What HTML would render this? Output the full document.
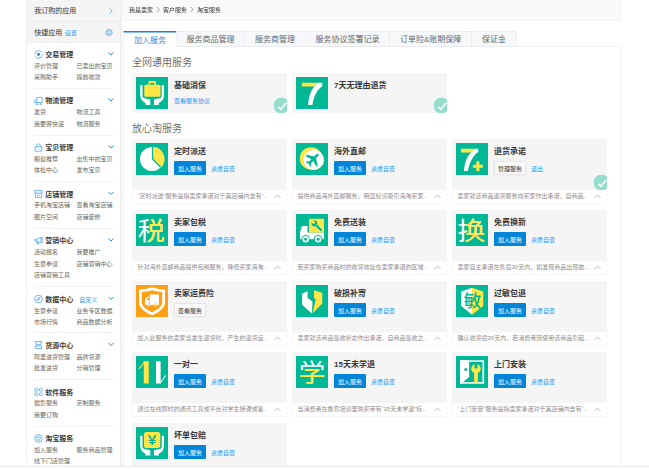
<!DOCTYPE html>
<html lang="zh-CN"><head><meta charset="utf-8"><title>淘宝服务</title>
<style>
html,body{margin:0;padding:0;background:#fff}
body{width:649px;height:469px;overflow:hidden;position:relative}
#p{position:absolute;left:0;top:0;width:1298px;height:938px;transform:scale(.5);transform-origin:0 0;overflow:hidden;
 font-family:"Liberation Sans","Noto Sans CJK SC",sans-serif;font-size:12px;color:#333}
.sf{font-family:"Liberation Sans","Noto Sans CJK SC",sans-serif}
.abs{position:absolute}
a{color:#1e96f3;text-decoration:none}
.sb{position:absolute;left:53px;top:0;width:188px;height:960px;background:#fff}
.sbl{position:absolute;left:0;top:0;width:1px;height:960px;background:#dedede}
.sbr{position:absolute;left:187px;top:0;width:3.500px;height:960px;background:#efefef}
.sr{position:absolute;left:1px;width:186px;background:#f5f5f5;border-bottom:1px solid #e6e6e6;box-sizing:border-box}
.sr .t{position:absolute;left:14.500px;font-size:14px;line-height:20px;color:#333;white-space:nowrap}
.sr .t a{font-size:12px;margin-left:1px}
.dv{position:absolute;left:16px;width:157px;height:1px;background:#e6e6e6}
.sh{position:absolute;left:37.500px;font:bold 14px/24px "Liberation Sans","Noto Sans CJK SC",sans-serif;color:#3c3c3c;white-space:nowrap}
.sh .zd{font:12px/24px "Liberation Sans","Noto Sans CJK SC",sans-serif;margin-left:8px}
.si{position:absolute;font-size:12px;line-height:20px;color:#666;white-space:nowrap}
.bc{position:absolute;left:247px;top:-1px;width:993px;height:40px;border:1px solid #e8e8e8;background:#fafafa}
.bc span{position:absolute;left:10px;top:10px;line-height:20px;font-size:12px;color:#333;white-space:nowrap}
.bc svg{margin:0 6px;vertical-align:-1px}
.tabs{position:absolute;left:247px;top:62px;height:31px;white-space:nowrap;font-size:0}
.tb{display:inline-block;box-sizing:border-box;height:31px;padding:0 20px;border-top:1px solid #e1e3e8;border-right:1px solid #e1e3e8;border-bottom:1px solid #e1e3e8;
 background:#f7f8fa;font-size:16px;line-height:32px;color:#666;vertical-align:top}
.tb.on{background:#fff;color:#2f8ae0;border-top:3px solid #1380d9;border-left:1px solid #e1e3e8;border-bottom:1px solid #fff;line-height:29px}
.box{position:absolute;left:247px;top:92px;width:993px;height:900px;border:1px solid #e1e3e8;background:#fff}
.h2{position:absolute;left:264px;font-size:20px;font-weight:300;line-height:28px;color:#2b2b2b;white-space:nowrap}
.cd{position:absolute;width:310px}
.cg{position:relative;background:#f5f5f5;overflow:hidden}
.ic{position:absolute;left:8px;top:8px;display:block}
.ct{position:absolute;left:84px;top:12px;font:bold 16px/24px "Liberation Sans","Noto Sans CJK SC",sans-serif;color:#383838;white-space:nowrap}
.bt{position:absolute;left:84px;top:44px;width:64px;height:28px;box-sizing:border-box;border-radius:2px;font-size:12px;line-height:31px;text-align:center;white-space:nowrap}
.bj{background:#0285d9;color:#fff}
.bw{background:#f9f9f9;color:#333;border:1px solid #ccc;line-height:29px}
.lk{position:absolute;left:158px;top:49.500px;font-size:12px;line-height:20px;color:#1e96f3;white-space:nowrap}
.lk0{left:84px;top:46px}
.bd{position:absolute;right:-5px;bottom:-1px}
.ds{position:relative;height:28px;box-sizing:border-box;border:1px solid #eee;border-top:0;background:#fff}
.ds span{position:absolute;left:10px;top:2px;line-height:20px;font-size:12px;color:#8c8c8c;white-space:nowrap}
.ds svg{position:absolute;left:283px;top:9px}
.ft{position:absolute;left:0;top:932px;width:1298px;height:6px;background:#fdfdfd;border-top:2px solid #ebebeb;box-sizing:border-box}
</style></head><body><div id="p">
<div class="sb"><div class="sbl"></div><div class="sbr"></div>
<div class="sr" style="top:0;height:44px;border-bottom:2px solid #ebebeb"><span class="t" style="top:10px">我订购的应用</span><svg class="abs" style="left:163.500px;top:15.500px" width="8" height="12" viewBox="0 0 8 12"><path d="M1 1l5.500 5l-5.500 5" fill="none" stroke="#3a9df0" stroke-width="1.400"/></svg></div>
<div class="sr" style="top:44px;height:41.500px;border-bottom:1.500px solid #e9e9e9"><span class="t" style="top:10px">快捷应用 <a>设置</a></span><svg class="abs" style="left:156px;top:12.500px" width="16" height="16" viewBox="0 0 16 16"><circle cx="8" cy="8" r="5.800" fill="none" stroke="#3a9df0" stroke-width="1.400"/><circle cx="8" cy="8" r="6.800" fill="none" stroke="#3a9df0" stroke-width="1" stroke-dasharray="2.200 3.140"/><circle cx="8" cy="8" r="2.300" fill="none" stroke="#3a9df0" stroke-width="1.200"/></svg></div>
<svg class="abs" style="left:14.500px;top:99.5px" width="18" height="18" viewBox="0 0 16 16"><circle cx="8" cy="8" r="6.800" fill="none" stroke="#3a9df0" stroke-width="1.300" stroke-dasharray="17 4.360"/><path d="M5.300 5.200h5.400v3.600L8 11.600L5.300 8.800z" fill="#3a9df0"/></svg>
<div class="sh" style="top:96.5px">交易管理</div>
<svg class="abs" style="left:162.500px;top:103.5px" width="12" height="8" viewBox="0 0 12 8"><path d="M1 1l5 5l5-5" fill="none" stroke="#2188e3" stroke-width="1.900"/></svg>
<div class="si" style="top:121.3px;left:15px">评价管理</div>
<div class="si" style="top:121.3px;left:100px">已卖出的宝贝</div>
<div class="si" style="top:144.2px;left:15px">采购助手</div>
<div class="si" style="top:144.2px;left:100px">提前收款</div>
<div class="dv" style="top:176px"></div>
<svg class="abs" style="left:14.500px;top:192px" width="18" height="18" viewBox="0 0 16 16"><path d="M5 2.500h9.500v9h-9.500zM5 6.500h-2.500l-1.700 2.500v2.500h4.200M5.500 13.500a1.300 1.300 0 1 0 .010 0M12 13.500a1.300 1.300 0 1 0 .010 0" fill="none" stroke="#3a9df0" stroke-width="1.300"/></svg>
<div class="sh" style="top:189px">物流管理</div>
<svg class="abs" style="left:162.500px;top:196px" width="12" height="8" viewBox="0 0 12 8"><path d="M1 1l5 5l5-5" fill="none" stroke="#2188e3" stroke-width="1.900"/></svg>
<div class="si" style="top:213.8px;left:15px">发货</div>
<div class="si" style="top:213.8px;left:100px">物流工具</div>
<div class="si" style="top:236.7px;left:15px">我要寄快递</div>
<div class="si" style="top:236.7px;left:100px">物流服务</div>
<div class="dv" style="top:269.5px"></div>
<svg class="abs" style="left:14.500px;top:285.5px" width="18" height="18" viewBox="0 0 16 16"><path d="M2 6.500h12v8h-12zM4.500 6.500v-1.500a3.500 3.500 0 0 1 7 0v1.500" fill="none" stroke="#3a9df0" stroke-width="1.300"/></svg>
<div class="sh" style="top:282.5px">宝贝管理</div>
<svg class="abs" style="left:162.500px;top:289.5px" width="12" height="8" viewBox="0 0 12 8"><path d="M1 1l5 5l5-5" fill="none" stroke="#2188e3" stroke-width="1.900"/></svg>
<div class="si" style="top:307.3px;left:15px">橱窗推荐</div>
<div class="si" style="top:307.3px;left:100px">出售中的宝贝</div>
<div class="si" style="top:330.2px;left:15px">体检中心</div>
<div class="si" style="top:330.2px;left:100px">发布宝贝</div>
<div class="dv" style="top:362.5px"></div>
<svg class="abs" style="left:14.500px;top:378.5px" width="18" height="18" viewBox="0 0 16 16"><path d="M1.500 2h13v4.500h-13zM2.500 6.500v7.500h11v-7.500M5.500 10h5" fill="none" stroke="#3a9df0" stroke-width="1.300"/></svg>
<div class="sh" style="top:375.5px">店铺管理</div>
<svg class="abs" style="left:162.500px;top:382.5px" width="12" height="8" viewBox="0 0 12 8"><path d="M1 1l5 5l5-5" fill="none" stroke="#2188e3" stroke-width="1.900"/></svg>
<div class="si" style="top:400.3px;left:15px">手机淘宝店铺</div>
<div class="si" style="top:400.3px;left:100px">查看淘宝店铺</div>
<div class="si" style="top:423.2px;left:15px">图片空间</div>
<div class="si" style="top:423.2px;left:100px">店铺装修</div>
<div class="dv" style="top:456px"></div>
<svg class="abs" style="left:14.500px;top:472px" width="18" height="18" viewBox="0 0 16 16"><path d="M1.500 5.800h3l8-3.800v10.500l-8-3.700h-3zM4 9l1.800 5.500h2.200l-1.200-4.500M14.500 2v10.500" fill="none" stroke="#3a9df0" stroke-width="1.300"/></svg>
<div class="sh" style="top:469px">营销中心</div>
<svg class="abs" style="left:162.500px;top:476px" width="12" height="8" viewBox="0 0 12 8"><path d="M1 1l5 5l5-5" fill="none" stroke="#2188e3" stroke-width="1.900"/></svg>
<div class="si" style="top:493.8px;left:15px">活动报名</div>
<div class="si" style="top:493.8px;left:100px">我要推广</div>
<div class="si" style="top:516.7px;left:15px">生意参谋</div>
<div class="si" style="top:516.7px;left:100px">店铺营销中心</div>
<div class="si" style="top:539.6px;left:15px">店铺营销工具</div>
<div class="dv" style="top:573px"></div>
<svg class="abs" style="left:14.500px;top:589px" width="18" height="18" viewBox="0 0 16 16"><circle cx="8" cy="8" r="6.800" fill="none" stroke="#3a9df0" stroke-width="1.300"/><path d="M5 11l2-4l4-2l-2 4z" fill="none" stroke="#3a9df0" stroke-width="1.200"/></svg>
<div class="sh" style="top:586px">数据中心 <a class="zd">自定义</a></div>
<svg class="abs" style="left:162.500px;top:593px" width="12" height="8" viewBox="0 0 12 8"><path d="M1 1l5 5l5-5" fill="none" stroke="#2188e3" stroke-width="1.900"/></svg>
<div class="si" style="top:610.8px;left:15px">生意参谋</div>
<div class="si" style="top:610.8px;left:100px">业务专区数据</div>
<div class="si" style="top:633.7px;left:15px">市场行情</div>
<div class="si" style="top:633.7px;left:100px">商品数据分析</div>
<div class="dv" style="top:665px"></div>
<svg class="abs" style="left:14.500px;top:681px" width="18" height="18" viewBox="0 0 16 16"><path d="M1.500 2h13M3 2l1 5.500h8l1-5.500M2.500 9.500h11v4.500h-11z" fill="none" stroke="#3a9df0" stroke-width="1.300"/></svg>
<div class="sh" style="top:678px">货源中心</div>
<svg class="abs" style="left:162.500px;top:685px" width="12" height="8" viewBox="0 0 12 8"><path d="M1 1l5 5l5-5" fill="none" stroke="#2188e3" stroke-width="1.900"/></svg>
<div class="si" style="top:702.8px;left:15px">阿里进货管理</div>
<div class="si" style="top:702.8px;left:100px">品牌货源</div>
<div class="si" style="top:725.7px;left:15px">批发进货</div>
<div class="si" style="top:725.7px;left:100px">分销管理</div>
<div class="dv" style="top:758.5px"></div>
<svg class="abs" style="left:14.500px;top:774.5px" width="18" height="18" viewBox="0 0 16 16"><rect x="1.500" y="1.500" width="5" height="5" rx="1.500" fill="none" stroke="#3a9df0" stroke-width="1.300"/><rect x="9.500" y="1.500" width="5" height="5" rx="1.500" fill="none" stroke="#3a9df0" stroke-width="1.300"/><rect x="1.500" y="9.500" width="5" height="5" rx="1.500" fill="none" stroke="#3a9df0" stroke-width="1.300"/><rect x="9.500" y="9.500" width="5" height="5" rx="1.500" fill="none" stroke="#3a9df0" stroke-width="1.300"/></svg>
<div class="sh" style="top:771.5px">软件服务</div>
<div class="si" style="top:796.3px;left:15px">摄影服务</div>
<div class="si" style="top:796.3px;left:100px">定制服务</div>
<div class="si" style="top:819.2px;left:15px">我要订购</div>
<div class="dv" style="top:851.5px"></div>
<svg class="abs" style="left:14.500px;top:867.5px" width="18" height="18" viewBox="0 0 16 16"><circle cx="8" cy="8" r="6.800" fill="none" stroke="#3a9df0" stroke-width="1.300"/><path d="M8 3.600l1.300 2.700l3 .400l-2.200 2.100l.500 3l-2.600-1.400l-2.600 1.400l.500-3l-2.200-2.100l3-.400z" fill="none" stroke="#3a9df0" stroke-width="1.100" stroke-linejoin="round"/></svg>
<div class="sh" style="top:864.5px">淘宝服务</div>
<div class="si" style="top:889.3px;left:15px">加入服务</div>
<div class="si" style="top:889.3px;left:100px">服务商品管理</div>
<div class="si" style="top:912.2px;left:15px">线下门店管理</div>
</div>
<div class="bc"><span>我是卖家<svg width="8" height="12" viewBox="0 0 8 12"><path d="M1 .500l5.500 5.500l-5.500 5.500" fill="none" stroke="#555" stroke-width="1.100"/></svg>客户服务<svg width="8" height="12" viewBox="0 0 8 12"><path d="M1 .500l5.500 5.500l-5.500 5.500" fill="none" stroke="#555" stroke-width="1.100"/></svg>淘宝服务</span></div>
<div class="box"></div>
<div class="tabs"><span class="tb on">加入服务</span><span class="tb">服务商品管理</span><span class="tb">服务商管理</span><span class="tb">服务协议签署记录</span><span class="tb">订单险&amp;账期保障</span><span class="tb">保证金</span></div>
<div class="h2" style="top:110px">全网通用服务</div>
<div class="h2" style="top:242px">放心淘服务</div>
<div class="cd" style="left:264px;top:146px"><div class="cg" style="height:80px"><svg class="ic" viewBox="0 0 64 64" width="64" height="64"><rect width="64" height="64" fill="#00b895"/><path d="M8.500 15.750H13V38Q13 42 17 42.500L28.500 45V55.750H19V52Q8.500 47 8.500 36z" fill="#fff"/><path d="M56 15.750H51.500V38Q51.500 42 47.500 42.500L36 45V55.750H45.500V52Q56 47 56 36z" fill="#fff"/><path d="M25 15.500v-5.500a2 2 0 0 1 2-2h11a2 2 0 0 1 2 2v5.500h-3.500v-3.500h-8v3.500z" fill="#ffe646"/><rect x="16.500" y="15.500" width="32.500" height="24" rx="3" fill="#ffe646"/></svg><div class="ct">基础消保</div><a class="lk lk0">查看服务协议</a><svg class="bd" width="32" height="32" viewBox="0 0 32 32"><circle cx="16" cy="16" r="16" fill="#96ddcb"/><path d="M9.500 18.500L14.500 23.500L25.500 10.500" fill="none" stroke="#fbfbfb" stroke-width="3.200"/></svg></div></div>
<div class="cd" style="left:584px;top:146px"><div class="cg" style="height:80px"><svg class="ic" viewBox="0 0 64 64" width="64" height="64"><rect width="64" height="64" fill="#00b895"/><path d="M11.750 11.500H44.250L36.750 19H11.750z" fill="#ffe646"/><path d="M44.250 11.500H52.500V18.250C43 24 35 38 33 55.750H24.250C25.500 38 30 27 36.750 19z" fill="#fff"/></svg><div class="ct"><b>7</b>天无理由退货</div><svg class="bd" width="32" height="32" viewBox="0 0 32 32"><circle cx="16" cy="16" r="16" fill="#96ddcb"/><path d="M9.500 18.500L14.500 23.500L25.500 10.500" fill="none" stroke="#fbfbfb" stroke-width="3.200"/></svg></div></div>
<div class="cd" style="left:264px;top:278px"><div class="cg" style="height:102px"><svg class="ic" viewBox="0 0 64 64" width="64" height="64"><rect width="64" height="64" fill="#00b895"/><circle cx="32" cy="32" r="24" fill="#fff"/><path d="M33 32V8a24 24 0 0 1 16.970 40.970z" fill="#ffe646"/><path d="M33 8v24l16 16" fill="none" stroke="#00b895" stroke-width="2.500"/></svg><div class="ct">定时派送</div><span class="bt bj">加入服务</span><a class="lk">资质自查</a></div><div class="ds"><span>“定时派送”服务是指卖家承诺对于其店铺内含有“..</span><svg width="14" height="8" viewBox="0 0 14 8"><path d="M1 7l6-6l6 6" fill="none" stroke="#999" stroke-width="1.300"/></svg></div></div>
<div class="cd" style="left:584px;top:278px"><div class="cg" style="height:102px"><svg class="ic" viewBox="0 0 64 64" width="64" height="64"><rect width="64" height="64" fill="#00b895"/><circle cx="30" cy="30.750" r="22.500" fill="#ffe646"/><circle cx="35.500" cy="33.750" r="20.500" fill="#fff"/><g transform="translate(34.500 32.500) rotate(45) scale(1.080 1.050)"><path d="M0-14c1.500 0 2.300 2 2.300 4.500v4.500l11.700 7.500v3.500l-11.700-3.800v6.300l3.700 2.800v2.700l-6-1.800-6 1.800v-2.700l3.700-2.800v-6.300l-11.700 3.800v-3.500l11.700-7.500v-4.500c0-2.500.800-4.500 2.300-4.500z" fill="#00b895"/></g></svg><div class="ct">海外直邮</div><span class="bt bj">加入服务</span><a class="lk">资质自查</a></div><div class="ds"><span>提供商品海外直邮服务，明显标识吸引海淘买家..</span><svg width="14" height="8" viewBox="0 0 14 8"><path d="M1 7l6-6l6 6" fill="none" stroke="#999" stroke-width="1.300"/></svg></div></div>
<div class="cd" style="left:904px;top:278px"><div class="cg" style="height:102px"><svg class="ic" viewBox="0 0 64 64" width="64" height="64"><rect width="64" height="64" fill="#00b895"/><path d="M10 11.500H37.500L30.500 19H10z" fill="#ffe646"/><path d="M37.500 11.500H44.500V18C35 24 27 38 23.750 55.750H15.750C17.500 38 22 27 30.500 19z" fill="#fff"/><path d="M40.750 36.500h6v7h7v6h-7v7h-6v-7h-7v-6h7z" fill="#ffe646"/></svg><div class="ct">退货承诺</div><span class="bt bw">管理服务</span><a class="lk">退出</a><svg class="bd" width="32" height="32" viewBox="0 0 32 32"><circle cx="16" cy="16" r="16" fill="#96ddcb"/><path d="M9.500 18.500L14.500 23.500L25.500 10.500" fill="none" stroke="#fbfbfb" stroke-width="3.200"/></svg></div><div class="ds"><span>卖家就该商品退货服务向买家作出承诺，自商品..</span><svg width="14" height="8" viewBox="0 0 14 8"><path d="M1 7l6-6l6 6" fill="none" stroke="#999" stroke-width="1.300"/></svg></div></div>
<div class="cd" style="left:264px;top:420px"><div class="cg" style="height:102px"><svg class="ic" viewBox="0 0 64 64" width="64" height="64"><rect width="64" height="64" fill="#00b895"/><defs><clipPath id="c-tax"><rect x="25.500" y="0" width="40" height="64"/></clipPath></defs><g transform="translate(0 52.2) scale(1 0.94)"><text x="30.5" y="0" text-anchor="middle" font-size="54" font-weight="400" fill="#fff" class="sf">税</text></g><g clip-path="url(#c-tax)"><g transform="translate(0 52.2) scale(1 0.94)"><text x="30.5" y="0" text-anchor="middle" font-size="54" font-weight="400" fill="#ffe646" class="sf">税</text></g></g></svg><div class="ct">卖家包税</div><span class="bt bj">加入服务</span><a class="lk">资质自查</a></div><div class="ds"><span>针对海外直邮商品提供包税服务，降低买家海淘..</span><svg width="14" height="8" viewBox="0 0 14 8"><path d="M1 7l6-6l6 6" fill="none" stroke="#999" stroke-width="1.300"/></svg></div></div>
<div class="cd" style="left:584px;top:420px"><div class="cg" style="height:102px"><svg class="ic" viewBox="0 0 64 64" width="64" height="64"><rect width="64" height="64" fill="#00b895"/><path d="M8 36.750l3-10.500q.800-2.250 3-2.250h9v12.750h33v11.750q0 2-2 2h-44q-2 0-2-2z" fill="#fff"/><rect x="26" y="9.250" width="30" height="27.500" rx="2.500" fill="#ffe646"/><circle cx="19.250" cy="50.500" r="8.500" fill="#00b895"/><circle cx="44.250" cy="50.500" r="8.500" fill="#00b895"/><circle cx="19.250" cy="50.500" r="6.500" fill="#fff"/><circle cx="44.250" cy="50.500" r="6.500" fill="#fff"/><circle cx="19.250" cy="50.500" r="3" fill="#00b895"/><circle cx="44.250" cy="50.500" r="3" fill="#00b895"/><g transform="translate(41 23) rotate(-45)"><path d="M-2.200-11.500a6 6 0 1 0 4.400 0v5.500h-4.400zM-2.200-1h4.400v13.500a2.200 2.200 0 0 1-4.400 0z" fill="#00b895"/></g></svg><div class="ct">免费送装</div><span class="bt bj">加入服务</span><a class="lk">资质自查</a></div><div class="ds"><span>若买家购买商品时的收货地址在卖家承诺的区域..</span><svg width="14" height="8" viewBox="0 0 14 8"><path d="M1 7l6-6l6 6" fill="none" stroke="#999" stroke-width="1.300"/></svg></div></div>
<div class="cd" style="left:904px;top:420px"><div class="cg" style="height:102px"><svg class="ic" viewBox="0 0 64 64" width="64" height="64"><rect width="64" height="64" fill="#00b895"/><defs><clipPath id="c-huan"><rect x="18.750" y="0" width="46" height="64"/></clipPath></defs><g transform="translate(0 52.2) scale(1 0.91)"><text x="30.5" y="0" text-anchor="middle" font-size="56" font-weight="400" fill="#fff" class="sf">换</text></g><g clip-path="url(#c-huan)"><g transform="translate(0 52.2) scale(1 0.91)"><text x="30.5" y="0" text-anchor="middle" font-size="56" font-weight="400" fill="#ffe646" class="sf">换</text></g></g></svg><div class="ct">免费换新</div><span class="bt bj">加入服务</span><a class="lk">资质自查</a></div><div class="ds"><span>卖家自主承诺在售后30天内，如发现商品出现故..</span><svg width="14" height="8" viewBox="0 0 14 8"><path d="M1 7l6-6l6 6" fill="none" stroke="#999" stroke-width="1.300"/></svg></div></div>
<div class="cd" style="left:264px;top:562px"><div class="cg" style="height:102px"><svg class="ic" viewBox="0 0 64 64" width="64" height="64"><rect width="64" height="64" fill="#ffa014"/><path d="M32 5Q46 8.500 58 9.500V34C58 47 45 55 32 60.500C19 55 6 47 6 34V9.500Q18 8.500 32 5z" fill="#fff"/><path d="M32 10.500Q43 13.200 52.500 14.200V34C52.500 43.500 42.500 50 32 54.500C21.500 50 11.500 43.500 11.500 34V14.200Q21 13.200 32 10.500z" fill="#ffa014"/><path d="M27 19h19v21h-28v-9q0-8 9-8z" fill="#fff"/><path d="M21 30q1-4.500 5-4.500v4.500z" fill="#ffa014"/><path d="M26.800 19.500v20" stroke="#ffa014" stroke-width="1.200"/><circle cx="25" cy="40.500" r="3.600" fill="#ffa014"/><circle cx="39" cy="40.500" r="3.600" fill="#ffa014"/><circle cx="25" cy="40.500" r="2.300" fill="#fff"/><circle cx="39" cy="40.500" r="2.300" fill="#fff"/></svg><div class="ct">卖家运费险</div><span class="bt bw">查看服务</span></div><div class="ds"><span>加入此服务的卖家当发生退货时，产生的退货运..</span><svg width="14" height="8" viewBox="0 0 14 8"><path d="M1 7l6-6l6 6" fill="none" stroke="#999" stroke-width="1.300"/></svg></div></div>
<div class="cd" style="left:584px;top:562px"><div class="cg" style="height:102px"><svg class="ic" viewBox="0 0 64 64" width="64" height="64"><rect width="64" height="64" fill="#00b895"/><path d="M12.250 17.500L23 11.750V25.500L33 33L31.750 56.750L12.250 39.250z" fill="#fff"/><path d="M36 10.500L52.500 15.500V36.750L33 56.750L39.250 29.250L36 25.500z" fill="#ffe646"/></svg><div class="ct">破损补寄</div><span class="bt bj">加入服务</span><a class="lk">资质自查</a></div><div class="ds"><span>卖家就该商品签收状态作出承诺，自商品签收之..</span><svg width="14" height="8" viewBox="0 0 14 8"><path d="M1 7l6-6l6 6" fill="none" stroke="#999" stroke-width="1.300"/></svg></div></div>
<div class="cd" style="left:904px;top:562px"><div class="cg" style="height:102px"><svg class="ic" viewBox="0 0 64 64" width="64" height="64"><rect width="64" height="64" fill="#00b895"/><path d="M32 5.500L10.500 13v28.750L32 59.250z" fill="#fff"/><path d="M32 5.500L54.500 13v28.750L32 59.250z" fill="#ffe646"/><text x="33" y="44" text-anchor="middle" font-size="35" font-weight="500" fill="#00b895" class="sf">敏</text></svg><div class="ct">过敏包退</div><span class="bt bj">加入服务</span><a class="lk">资质自查</a></div><div class="ds"><span>确认收货后30天内，若消费者因使用该商品引起..</span><svg width="14" height="8" viewBox="0 0 14 8"><path d="M1 7l6-6l6 6" fill="none" stroke="#999" stroke-width="1.300"/></svg></div></div>
<div class="cd" style="left:264px;top:704px"><div class="cg" style="height:102px"><svg class="ic" viewBox="0 0 64 64" width="64" height="64"><rect width="64" height="64" fill="#00b895"/><path d="M15.500 10.500h10v44.500h-10z" fill="#ffe646"/><path d="M16.500 10.500l-11.500 15l1.600 1.300l11.500-15z" fill="#ffe646"/><path d="M40 10.500h9.250v44.500h-9.250z" fill="#fff"/><path d="M47.500 54l11-15.500l1.600 1.200l-11 15.500z" fill="#fff"/></svg><div class="ct">一对一</div><span class="bt bj">加入服务</span><a class="lk">资质自查</a></div><div class="ds"><span>通过在线即时的通讯工具或平台对学生授课或答..</span><svg width="14" height="8" viewBox="0 0 14 8"><path d="M1 7l6-6l6 6" fill="none" stroke="#999" stroke-width="1.300"/></svg></div></div>
<div class="cd" style="left:584px;top:704px"><div class="cg" style="height:102px"><svg class="ic" viewBox="0 0 64 64" width="64" height="64"><rect width="64" height="64" fill="#00b895"/><defs><clipPath id="c-xue"><rect x="0" y="28" width="64" height="36"/></clipPath></defs><g transform="translate(0 52.5) scale(1 0.95)"><text x="32" y="0" text-anchor="middle" font-size="53" font-weight="400" fill="#fff" class="sf">学</text></g><g clip-path="url(#c-xue)"><g transform="translate(0 52.5) scale(1 0.95)"><text x="32" y="0" text-anchor="middle" font-size="53" font-weight="400" fill="#ffe646" class="sf">学</text></g></g></svg><div class="ct"><b>15</b>天未学退</div><span class="bt bj">加入服务</span><a class="lk">资质自查</a></div><div class="ds"><span>当消费者在教育培训里购买带有“15天未学退”标..</span><svg width="14" height="8" viewBox="0 0 14 8"><path d="M1 7l6-6l6 6" fill="none" stroke="#999" stroke-width="1.300"/></svg></div></div>
<div class="cd" style="left:904px;top:704px"><div class="cg" style="height:102px"><svg class="ic" viewBox="0 0 64 64" width="64" height="64"><rect width="64" height="64" fill="#00b895"/><rect x="9.750" y="10.250" width="44.750" height="43.500" fill="none" stroke="#e9fbf4" stroke-width="3.500"/><path d="M8 8.500H26.250V42L10 55.500H8z" fill="#fff"/><circle cx="19.500" cy="26.750" r="3" fill="#00b895"/><path d="M36.250 30h7.500v23.500h-7.500z" fill="#ffe646"/><circle cx="40" cy="25.500" r="9.500" fill="#ffe646"/><rect x="37" y="14" width="6" height="11" fill="#00b895"/></svg><div class="ct">上门安装</div><span class="bt bj">加入服务</span><a class="lk">资质自查</a></div><div class="ds"><span>“上门安装”服务是指卖家承诺对于其店铺内含有“..</span><svg width="14" height="8" viewBox="0 0 14 8"><path d="M1 7l6-6l6 6" fill="none" stroke="#999" stroke-width="1.300"/></svg></div></div>
<div class="cd" style="left:264px;top:846px"><div class="cg" style="height:102px"><svg class="ic" viewBox="0 0 64 64" width="64" height="64"><rect width="64" height="64" fill="#00b895"/><path d="M8.500 17.500H13V39.500Q13 43.500 17 44L28.500 46.500V57H19V53.500Q8.500 48.500 8.500 37.500z" fill="#fff"/><path d="M56 17.500H51.500V39.500Q51.500 43.500 47.500 44L36 46.500V57H45.500V53.500Q56 48.500 56 37.500z" fill="#fff"/><rect x="16" y="10" width="32.500" height="32" rx="5" fill="#ffe646"/><text x="32.250" y="36" text-anchor="middle" font-size="25" font-weight="700" fill="#00b895" class="sf">￥</text></svg><div class="ct">坏单包赔</div><span class="bt bj">加入服务</span><a class="lk">资质自查</a></div><div class="ds"><span>买家购买商品后出现坏单情况，由卖家承担赔付..</span><svg width="14" height="8" viewBox="0 0 14 8"><path d="M1 7l6-6l6 6" fill="none" stroke="#999" stroke-width="1.300"/></svg></div></div>
<div class="ft"></div>
</div></body></html>
